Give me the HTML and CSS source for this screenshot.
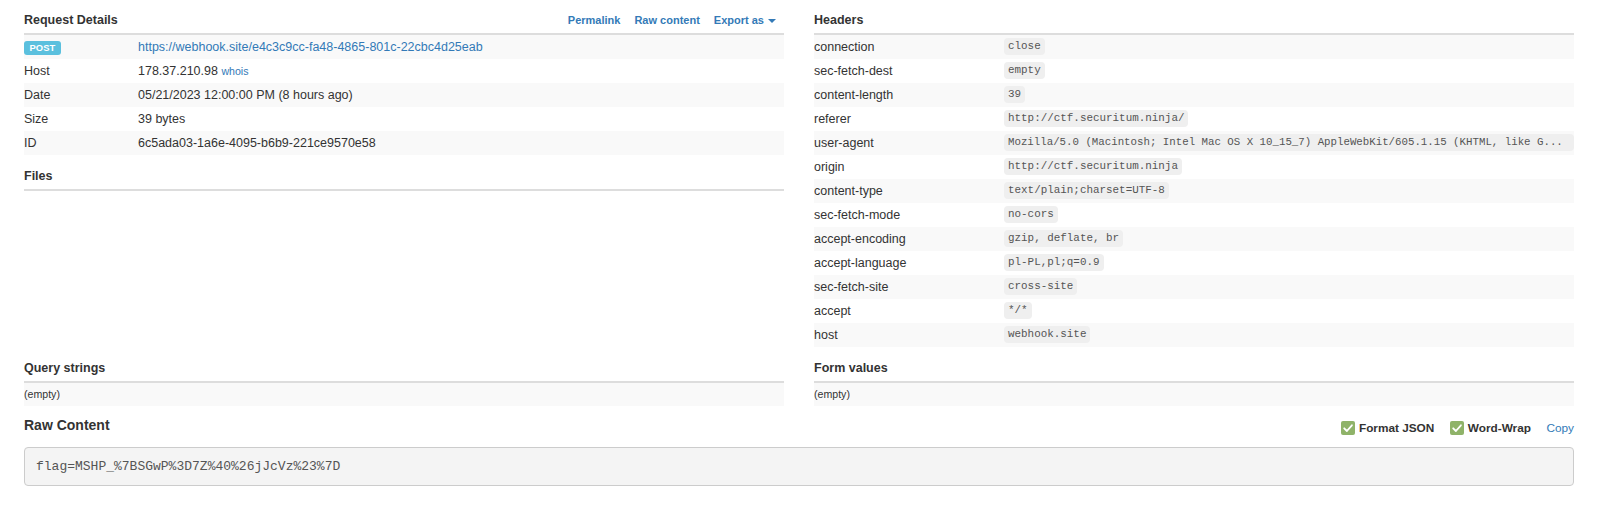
FILE: index.html
```html
<!DOCTYPE html>
<html>
<head>
<meta charset="utf-8">
<title>Request Details</title>
<link rel="stylesheet" href="styles.css">
</head>
<body>
<div class="page">
  <div class="grid">
    <section class="col">
      <table class="tbl">
        <colgroup><col class="k-left"><col></colgroup>
        <thead>
          <tr><th colspan="2"><div class="head-row"><span>Request Details</span>
            <span class="actions"><a href="#">Permalink</a><a href="#">Raw content</a><a href="#">Export as <span class="caret"></span></a></span></div></th></tr>
        </thead>
        <tbody>
          <tr><td><span class="label">POST</span></td><td><a class="url" href="#">https://webhook.site/e4c3c9cc-fa48-4865-801c-22cbc4d25eab</a></td></tr>
          <tr><td>Host</td><td>178.37.210.98 <a class="small-link" href="#">whois</a></td></tr>
          <tr><td>Date</td><td>05/21/2023 12:00:00 PM (8 hours ago)</td></tr>
          <tr><td>Size</td><td>39 bytes</td></tr>
          <tr><td>ID</td><td>6c5ada03-1a6e-4095-b6b9-221ce9570e58</td></tr>
        </tbody>
      </table>
      <table class="tbl">
        <thead><tr><th>Files</th></tr></thead>
      </table>
    </section>
    <section class="col">
      <table class="tbl">
        <colgroup><col class="k-right"><col></colgroup>
        <thead><tr><th colspan="2">Headers</th></tr></thead>
        <tbody>
          <tr><td>connection</td><td><code>close</code></td></tr>
          <tr><td>sec-fetch-dest</td><td><code>empty</code></td></tr>
          <tr><td>content-length</td><td><code>39</code></td></tr>
          <tr><td>referer</td><td><code>http://ctf.securitum.ninja/</code></td></tr>
          <tr><td>user-agent</td><td><code class="long">Mozilla/5.0 (Macintosh; Intel Mac OS X 10_15_7) AppleWebKit/605.1.15 (KHTML, like G...</code></td></tr>
          <tr><td>origin</td><td><code>http://ctf.securitum.ninja</code></td></tr>
          <tr><td>content-type</td><td><code>text/plain;charset=UTF-8</code></td></tr>
          <tr><td>sec-fetch-mode</td><td><code>no-cors</code></td></tr>
          <tr><td>accept-encoding</td><td><code>gzip, deflate, br</code></td></tr>
          <tr><td>accept-language</td><td><code>pl-PL,pl;q=0.9</code></td></tr>
          <tr><td>sec-fetch-site</td><td><code>cross-site</code></td></tr>
          <tr><td>accept</td><td><code>*/*</code></td></tr>
          <tr><td>host</td><td><code>webhook.site</code></td></tr>
        </tbody>
      </table>
    </section>
    <section class="col">
      <table class="tbl">
        <thead><tr><th>Query strings</th></tr></thead>
        <tbody><tr class="empty-row"><td>(empty)</td></tr></tbody>
      </table>
    </section>
    <section class="col">
      <table class="tbl">
        <thead><tr><th>Form values</th></tr></thead>
        <tbody><tr class="empty-row"><td>(empty)</td></tr></tbody>
      </table>
    </section>
  </div>
  <div class="raw-head">
    <h4>Raw Content</h4>
    <div class="raw-tools">
      <label class="check"><span class="box"><svg viewBox="0 0 14 14" width="14" height="14"><path d="M3.2 7.3 L5.9 10 L10.9 4.3" fill="none" stroke="#fff" stroke-width="1.8" stroke-linecap="round" stroke-linejoin="round"/></svg></span>Format JSON</label>
      <label class="check"><span class="box"><svg viewBox="0 0 14 14" width="14" height="14"><path d="M3.2 7.3 L5.9 10 L10.9 4.3" fill="none" stroke="#fff" stroke-width="1.8" stroke-linecap="round" stroke-linejoin="round"/></svg></span>Word-Wrap</label>
      <a href="#" class="copy">Copy</a>
    </div>
  </div>
  <pre class="raw">flag=MSHP_%7BSGwP%3D7Z%40%26jJcVz%23%7D</pre>
</div>
</body>
</html>
```

FILE: styles.css
```css
* { box-sizing: border-box; }
html, body { margin: 0; padding: 0; background: #fff; }
body {
  font-family: "Liberation Sans", Arial, Helvetica, sans-serif;
  font-size: 12.5px;
  color: #333;
}
a { color: #337ab7; text-decoration: none; }

.page { padding: 5px 24px 0; }

.grid {
  display: grid;
  grid-template-columns: 1fr 1fr;
  column-gap: 30px;
}

.tbl {
  width: 100%;
  border-collapse: collapse;
  table-layout: fixed;
  margin-bottom: 6px;
}
.k-left { width: 114px; }
.k-right { width: 190px; }

.tbl th {
  text-align: left;
  font-weight: bold;
  font-size: 12.5px;
  line-height: 18px;
  padding: 6px 0 4px;
  border-bottom: 2px solid #ddd;
  color: #333;
}
.head-row { display: flex; justify-content: space-between; align-items: center; }
.actions { display: flex; gap: 14px; padding-right: 8px; font-size: 11px; }
.actions a { font-weight: bold; }
.caret {
  display: inline-block;
  width: 0; height: 0;
  margin-left: 1px;
  vertical-align: middle;
  border-top: 4px solid #337ab7;
  border-left: 4px solid transparent;
  border-right: 4px solid transparent;
}

.tbl td {
  padding: 3px 0;
  height: 24px;
  line-height: 18px;
  white-space: nowrap;
  vertical-align: top;
  overflow: hidden;
}
.tbl tbody tr:nth-child(odd) { background: #f9f9f9; }

.label {
  display: inline-block;
  vertical-align: top;
  margin-top: 3px;
  background: #5bc0de;
  color: #fff;
  font-weight: bold;
  font-size: 9.4px;
  line-height: 9.4px;
  padding: 2px 5.6px 3px;
  border-radius: 3px;
}
.small-link { font-size: 10.6px; }

code {
  display: inline-block;
  vertical-align: top;
  max-width: 100%;
  white-space: nowrap;
  font-family: "Liberation Mono", "Courier New", monospace;
  font-size: 10.9px;
  line-height: 13px;
  padding: 2px 4px;
  background: #efefef;
  color: #555;
  border-radius: 4px;
}
code.long { width: 100%; font-size: 10.75px; overflow: hidden; }

.empty-row td { font-size: 10.6px; line-height: 17px; height: 23px; }

.raw-head {
  display: flex;
  justify-content: space-between;
  align-items: center;
  margin-top: 3px;
}
.raw-head h4 {
  margin: 0;
  font-size: 14px;
  line-height: 20px;
  font-weight: bold;
}
.raw-tools {
  display: flex;
  align-items: center;
  gap: 15.5px;
  margin-top: 6px;
  font-size: 11.8px;
}
.check { display: flex; align-items: center; gap: 4px; font-weight: bold; }
.box {
  display: inline-block;
  width: 14px; height: 14px;
  border-radius: 2px;
  background: #8fb369;
}
.box svg { display: block; }
.copy { font-weight: normal; }

.raw {
  margin: 12px 0 0;
  padding: 9.5px 11px;
  background: #f4f4f4;
  border: 1px solid #ccc;
  border-radius: 4px;
  font-family: "Liberation Mono", "Courier New", monospace;
  font-size: 13px;
  line-height: 18px;
  color: #555;
}
```
